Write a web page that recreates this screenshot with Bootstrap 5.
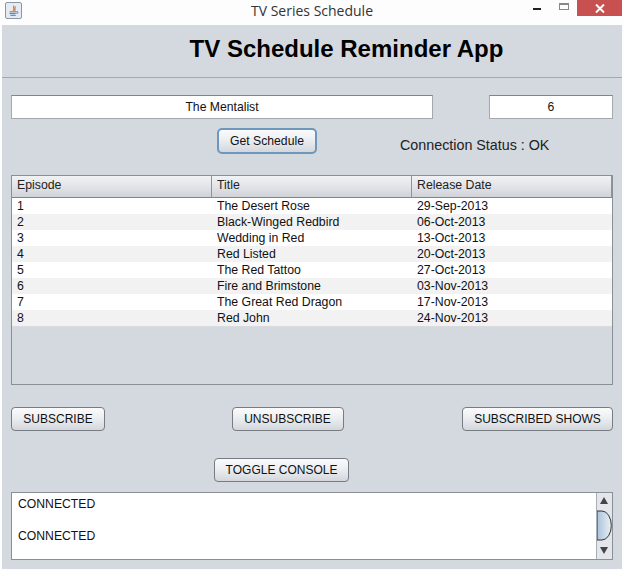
<!DOCTYPE html>
<html lang="en">
<head>
<meta charset="utf-8">
<title>TV Series Schedule</title>
<link rel="stylesheet" href="https://cdn.jsdelivr.net/npm/bootstrap@5.3.0/dist/css/bootstrap.min.css">
<style>
html,body{height:571px;overflow:hidden}
body{background:#fdfdfd;font-family:"Liberation Sans",Arial,sans-serif;color:#111;width:624px}
.titlebar{height:25px;padding-left:5px;position:relative}
.titlebar .wintitle{flex:1;text-align:center;font-family:"Open Sans","Liberation Sans",sans-serif;font-size:14px;line-height:22px;color:#333;padding-right:22px}
.javaico{width:17px;height:17px;margin-top:2px;border:1px solid #8a97a6;border-radius:2px;background:#e6ebf2;display:block}
.winctl{position:absolute;top:0;right:2px;width:134px;height:16px}
.w-min{position:absolute;left:45px;top:8px;width:8px;height:2px;background:#222}
.w-max{position:absolute;left:71px;top:3px;width:10px;height:7px;border:1px solid #888;border-top-width:2px}
.w-close{position:absolute;left:89px;top:0;width:45px;height:16px;background:#c75050;color:#fff;display:flex;align-items:center;justify-content:center}
.panelmain{margin:0 2px;width:620px;height:544px;background:#d4d8df}
.headbar{height:53px;border-bottom:1px solid #a5a9af;text-align:center;padding-left:69px}
.headbar h1{font-size:24px;font-weight:700;line-height:47px;margin:0;color:#000;font-family:"Liberation Sans",Arial,sans-serif}
.inrow{margin:17px 9px 0 9px;justify-content:space-between}
.finput{height:24px;padding:0;border:1px solid #a4a9b0;border-top-color:#7f858c;border-radius:0;font-size:12.2px;line-height:22px;text-align:center;color:#111;background:#fff;font-family:"Liberation Sans",Arial,sans-serif}
.finput:focus{box-shadow:none;border-color:#a4a9b0}
.f-wide{width:422px}.f-num{width:124px}
.jbtn{height:24px;padding:0;border:1px solid #777c82;border-radius:4px;background:linear-gradient(#fbfbfc,#eceef1 45%,#d3d7dc);font-size:12px;line-height:23px;color:#111;--bs-btn-hover-bg:#eee}
.getrow{margin:8px 9px 0 215px;height:28px;align-items:center}
.b-get{width:100px;height:26px;border:2px solid #6d97bd;border-radius:5px;line-height:22px;font-size:12.2px}
.statuslbl{margin-left:83px;font-size:14.3px;color:#222;padding-top:10px}
.tblbox{margin:20px 9px 0 9px;height:210px;width:602px;border:1px solid #8a8f96;overflow:hidden;background:#d4d8df}
.tblbox table{width:600px;table-layout:fixed;margin:0;font-size:12.3px;--bs-table-bg:transparent;border-collapse:separate;border-spacing:0}
.tblbox th{height:22px;padding:0 0 0 5px;font-weight:400;color:#222;line-height:19px;vertical-align:top;border-bottom:1px solid #7f858c;border-right:1px solid #8f949b;background:linear-gradient(#f1f2f4,#e2e4e8 50%,#cfd2d7)}
.tblbox td{height:16px;padding:0 0 0 5px;line-height:16px;border:0;color:#111;background:#fff}
.tblbox tr.alt td{background:#f2f2f2}
.tblbox tbody tr:last-child td{border-bottom:1px solid #d8dadd}
.actrow{margin:22px 9px 0 9px;justify-content:space-between}
.b-sub{width:94px}.b-uns{width:112px;margin-left:8px}.b-shows{width:151px}
.togrow{margin:26px 0 0 212px}
.b-tog{width:135px}
.consolebox{margin:10px 9px 0 9px;width:602px;height:68px;border:1px solid #8a8f96;background:#fff}
.consoletext{flex:1;padding:3px 0 0 6px;font-size:12.2px;line-height:16px;color:#111}
.consoletext p{margin:0 0 16px}
.sbar{width:16px;height:66px;background:#e3e6ea;border-left:1px solid #a9aeb5;position:relative}
.sbar svg{display:block;position:absolute;left:0;top:0}
</style>
</head>
<body>
<div class="titlebar d-flex">
  <svg class="javaico" viewBox="0 0 17 17"><path d="M9 3c-2 2 2 3-1 6M11 4c-2 1 0 3-1 5" fill="none" stroke="#d9722c" stroke-width="1.2"/><path d="M4 10h8M4 12h7M5 14h6" stroke="#3b6ea8" stroke-width="1"/><path d="M12 10c2-1 2 2 0 2" fill="none" stroke="#3b6ea8"/></svg>
  <div class="wintitle">TV Series Schedule</div>
  <div class="winctl">
    <span class="w-min"></span><span class="w-max"></span>
    <span class="w-close"><svg width="10" height="9" viewBox="0 0 10 9"><path d="M1 .5l8 8M9 .5l-8 8" stroke="#fff" stroke-width="2"/></svg></span>
  </div>
</div>
<main class="panelmain">
  <div class="headbar"><h1>TV Schedule Reminder App</h1></div>
  <div class="inrow d-flex">
    <input class="form-control finput f-wide" type="text" value="The Mentalist" aria-label="Series">
    <input class="form-control finput f-num" type="text" value="6" aria-label="Season">
  </div>
  <div class="getrow d-flex">
    <button class="btn jbtn b-get" type="button">Get Schedule</button>
    <div class="statuslbl">Connection Status : OK</div>
  </div>
  <div class="tblbox">
    <table class="table">
      <thead><tr><th>Episode</th><th>Title</th><th>Release Date</th></tr></thead>
      <tbody>
        <tr><td>1</td><td>The Desert Rose</td><td>29-Sep-2013</td></tr>
        <tr class="alt"><td>2</td><td>Black-Winged Redbird</td><td>06-Oct-2013</td></tr>
        <tr><td>3</td><td>Wedding in Red</td><td>13-Oct-2013</td></tr>
        <tr class="alt"><td>4</td><td>Red Listed</td><td>20-Oct-2013</td></tr>
        <tr><td>5</td><td>The Red Tattoo</td><td>27-Oct-2013</td></tr>
        <tr class="alt"><td>6</td><td>Fire and Brimstone</td><td>03-Nov-2013</td></tr>
        <tr><td>7</td><td>The Great Red Dragon</td><td>17-Nov-2013</td></tr>
        <tr class="alt"><td>8</td><td>Red John</td><td>24-Nov-2013</td></tr>
      </tbody>
    </table>
  </div>
  <div class="actrow d-flex">
    <button class="btn jbtn b-sub" type="button">SUBSCRIBE</button>
    <button class="btn jbtn b-uns" type="button">UNSUBSCRIBE</button>
    <button class="btn jbtn b-shows" type="button">SUBSCRIBED SHOWS</button>
  </div>
  <div class="togrow"><button class="btn jbtn b-tog" type="button">TOGGLE CONSOLE</button></div>
  <div class="consolebox d-flex">
    <div class="consoletext"><p>CONNECTED</p><p>CONNECTED</p></div>
    <div class="sbar">
      <svg width="15" height="66" viewBox="0 0 15 66">
        <defs><linearGradient id="thumbg" x1="0" y1="0" x2="1" y2="0"><stop offset="0" stop-color="#a9c3d9"/><stop offset="1" stop-color="#e9f0f6"/></linearGradient></defs>
        <path d="M3 14l4-7 4 7Z" transform="translate(0,-3)" fill="#444"/>
        <path d="M0 18h5a9 14 0 0 1 0 29H0Z" fill="url(#thumbg)" stroke="#333" stroke-width="1"/>
        <path d="M3 54h8l-4 7Z" fill="#444"/>
      </svg>
    </div>
  </div>
</main>
<script src="https://cdn.jsdelivr.net/npm/bootstrap@5.3.0/dist/js/bootstrap.bundle.min.js"></script>
</body>
</html>
